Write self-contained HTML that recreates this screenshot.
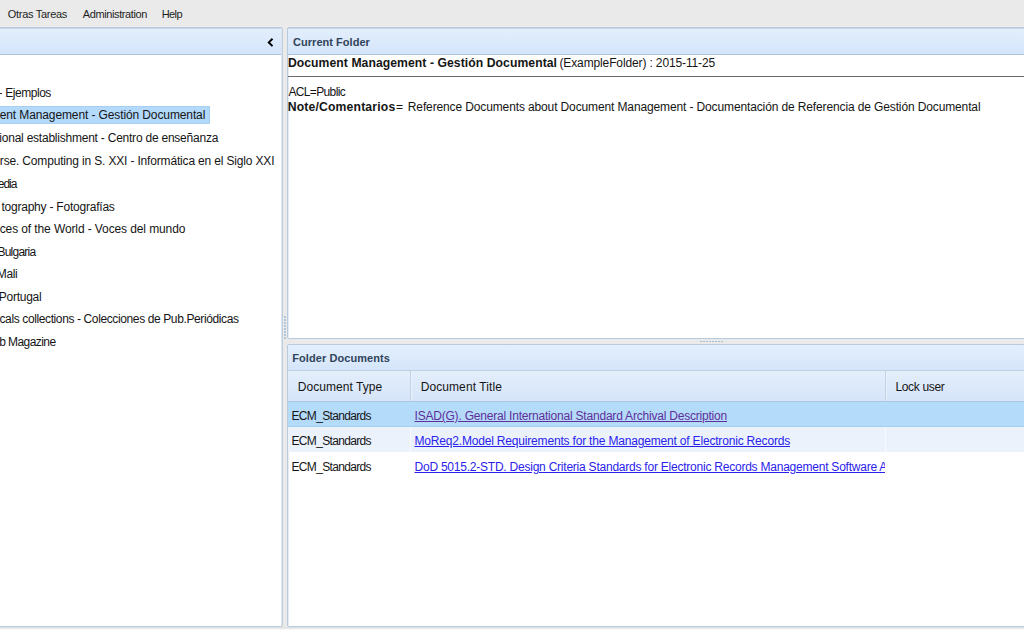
<!DOCTYPE html>
<html><head><meta charset="utf-8">
<style>
html,body{margin:0;padding:0;}
body{width:1024px;height:631px;overflow:hidden;position:relative;background:#eaeaea;font-family:"Liberation Sans",sans-serif;color:#000;}
.b{position:absolute;box-sizing:border-box;}
.t{position:absolute;white-space:pre;line-height:20px;color:#151515;}
</style></head><body>
<!-- menu bar -->
<div class="b" style="left:0;top:26px;width:1024px;height:1px;background:#eeeeee"></div>
<div class="t" style="left:7.80px;top:4px;font-size:11px;letter-spacing:-0.291px;color:#1e1e1e">Otras Tareas</div><div class="t" style="left:82.80px;top:4px;font-size:11px;letter-spacing:-0.392px;color:#1e1e1e">Administration</div><div class="t" style="left:161.70px;top:4px;font-size:11px;letter-spacing:-0.6px;color:#1e1e1e">Help</div>
<div class="b" style="left:0;top:627px;width:1024px;height:1px;background:#e0e1e3"></div>
<div class="b" style="left:0;top:629px;width:1024px;height:1px;background:#f8f8f8"></div>
<div class="b" style="left:0;top:630px;width:1024px;height:1px;background:#fff"></div>

<!-- left panel -->
<div class="b" style="left:-3px;top:27px;width:286px;height:600px;background:#fff;border:1px solid #b8cadd;border-right-color:#c0cfde;border-radius:2px"></div>
<div class="b" style="left:281px;top:28px;width:1px;height:598px;background:#dbe5ef"></div>
<div class="b" style="left:0;top:28px;width:281px;height:27px;background:linear-gradient(#e3eefc,#d4e5fb);border-top:1px solid #c6d6e6;border-bottom:1px solid #abc3da;"></div>
<svg class="b" style="left:0;top:0" width="300" height="60"><path d="M272.5 38.7 L268.8 42.4 L272.5 46.1" fill="none" stroke="#000" stroke-width="2"/></svg>
<div class="b" style="left:-1px;top:106px;width:211px;height:18px;background:#b3d9fb;border:1px solid #a8cef2"></div>
<div class="b" style="left:0;top:0;width:281px;height:631px;overflow:hidden">
<div class="b" style="left:0;top:93px;width:2px;height:1px;background:#333"></div>
<div class="t" style="left:5.30px;top:83px;font-size:12px;letter-spacing:-0.471px;">Ejemplos</div><div class="t" style="left:-0.30px;top:105px;font-size:12px;letter-spacing:-0.112px;">ent Management - Gestión Documental</div><div class="t" style="left:-0.70px;top:128px;font-size:12px;letter-spacing:-0.228px;">ional establishment - Centro de enseñanza</div><div class="t" style="left:-0.20px;top:151px;font-size:12px;letter-spacing:-0.166px;">rse. Computing in S. XXI - Informática en el Siglo XXI</div><div class="t" style="left:-2.20px;top:174px;font-size:12px;letter-spacing:-1.067px;">edia</div><div class="t" style="left:1.40px;top:197px;font-size:12px;letter-spacing:-0.219px;">tography - Fotografías</div><div class="t" style="left:-0.30px;top:219px;font-size:12px;letter-spacing:-0.106px;">ces of the World - Voces del mundo</div><div class="t" style="left:-2.60px;top:242px;font-size:12px;letter-spacing:-0.757px;">Bulgaria</div><div class="t" style="left:-3.20px;top:264px;font-size:12px;letter-spacing:-0.4px;">Mali</div><div class="t" style="left:-1.30px;top:287px;font-size:12px;letter-spacing:-0.243px;">Portugal</div><div class="t" style="left:-0.50px;top:309px;font-size:12px;letter-spacing:-0.383px;">cals collections - Colecciones de Pub.Periódicas</div><div class="t" style="left:-0.80px;top:332px;font-size:12px;letter-spacing:-0.567px;">b Magazine</div>
</div>

<!-- right top panel -->
<div class="b" style="left:287px;top:27px;width:742px;height:312px;background:#fff;border:1px solid #b8cadd;border-radius:2px"></div>
<div class="b" style="left:288px;top:28px;width:1px;height:310px;background:#e4ebf3"></div>
<div class="b" style="left:288px;top:28px;width:740px;height:27px;background:linear-gradient(#e3eefc,#d4e5fb);border-top:1px solid #c6d6e6;border-bottom:1px solid #abc3da;"></div>
<div class="t" style="left:293.00px;top:32px;font-size:11px;font-weight:bold;letter-spacing:0.038px;color:#30445a">Current Folder</div>
<div class="t" style="left:287.90px;top:53px;font-size:12.2px;font-weight:bold;letter-spacing:0.059px;">Document Management - Gestión Documental</div><div class="t" style="left:559.50px;top:53px;font-size:12px;letter-spacing:-0.13px;">(ExampleFolder) : 2015-11-25</div>
<div class="b" style="left:288px;top:76px;width:740px;height:1px;background:#6a6a6a"></div>
<div class="t" style="left:288.40px;top:82px;font-size:12px;letter-spacing:-0.633px;">ACL=Public</div><div class="t" style="left:287.70px;top:97px;font-size:12.2px;font-weight:bold;letter-spacing:0.167px;">Note/Comentarios</div><div class="t" style="left:396.00px;top:97px;font-size:12px;letter-spacing:0.0px;">=</div><div class="t" style="left:407.80px;top:97px;font-size:12px;letter-spacing:-0.127px;">Reference Documents about Document Management - Documentación de Referencia de Gestión Documental</div>

<!-- right bottom panel -->
<div class="b" style="left:287px;top:344px;width:742px;height:283px;background:#fff;border:1px solid #b8cadd;border-radius:2px"></div>
<div class="b" style="left:288px;top:345px;width:1px;height:281px;background:#e4ebf3"></div>
<div class="b" style="left:288px;top:345px;width:740px;height:26px;background:linear-gradient(#e3effd,#d5e5fa);border-bottom:1px solid #bccfe3;"></div>
<div class="t" style="left:292.20px;top:348px;font-size:11px;font-weight:bold;letter-spacing:0.08px;color:#30445a">Folder Documents</div>
<div class="b" style="left:288px;top:371px;width:740px;height:31px;background:linear-gradient(#e4eefb,#d6e5f9);border-bottom:1px solid #a9c5df;"></div>
<div class="b" style="left:410px;top:371px;width:1px;height:30px;background:#c3d2e4"></div>
<div class="b" style="left:411px;top:371px;width:1px;height:30px;background:#e8f0fb"></div>
<div class="b" style="left:885px;top:371px;width:1px;height:30px;background:#c3d2e4"></div>
<div class="b" style="left:886px;top:371px;width:1px;height:30px;background:#e8f0fb"></div>
<div class="t" style="left:297.70px;top:377px;font-size:12px;letter-spacing:0.058px;">Document Type</div><div class="t" style="left:420.70px;top:377px;font-size:12px;letter-spacing:0.085px;">Document Title</div><div class="t" style="left:895.40px;top:377px;font-size:12px;letter-spacing:-0.325px;">Lock user</div>
<div class="b" style="left:288px;top:402px;width:740px;height:25px;background:#b5dbfb;border-bottom:1px solid #a4cff2"></div>
<div class="b" style="left:288px;top:427px;width:740px;height:25px;background:#ebf2fc"></div>
<div class="b" style="left:885px;top:427px;width:1px;height:25px;background:#f8fafd"></div>
<div class="b" style="left:410px;top:427px;width:1px;height:25px;background:#f8fafd"></div>
<div class="t" style="left:291.50px;top:406px;font-size:12px;letter-spacing:-0.667px;">ECM_Standards</div><div class="t" style="left:291.50px;top:431px;font-size:12px;letter-spacing:-0.667px;">ECM_Standards</div><div class="t" style="left:291.50px;top:457px;font-size:12px;letter-spacing:-0.667px;">ECM_Standards</div>
<div class="t" style="left:414.50px;top:406px;font-size:12px;letter-spacing:-0.205px;color:#5e2f99;text-decoration:underline">ISAD(G). General International Standard Archival Description</div><div class="t" style="left:414.50px;top:431px;font-size:12px;letter-spacing:-0.182px;color:#2a22ec;text-decoration:underline">MoReq2.Model Requirements for the Management of Electronic Records</div>
<div class="b" style="left:0;top:0;width:885px;height:631px;overflow:hidden"><div class="t" style="left:414.50px;top:457px;font-size:12px;letter-spacing:-0.228px;color:#2a22ec;text-decoration:underline">DoD 5015.2-STD. Design Criteria Standards for Electronic Records Management Software Applications</div></div>

<!-- splitter grips -->
<div class="b" style="left:700px;top:341px;width:23px;height:1px;background:repeating-linear-gradient(90deg,#a9bdd3 0 2px,transparent 2px 3px)"></div>
<div class="b" style="left:284px;top:316px;width:2px;height:23px;background:repeating-linear-gradient(#b4c6d9 0 2px,transparent 2px 3px)"></div>
</body></html>
